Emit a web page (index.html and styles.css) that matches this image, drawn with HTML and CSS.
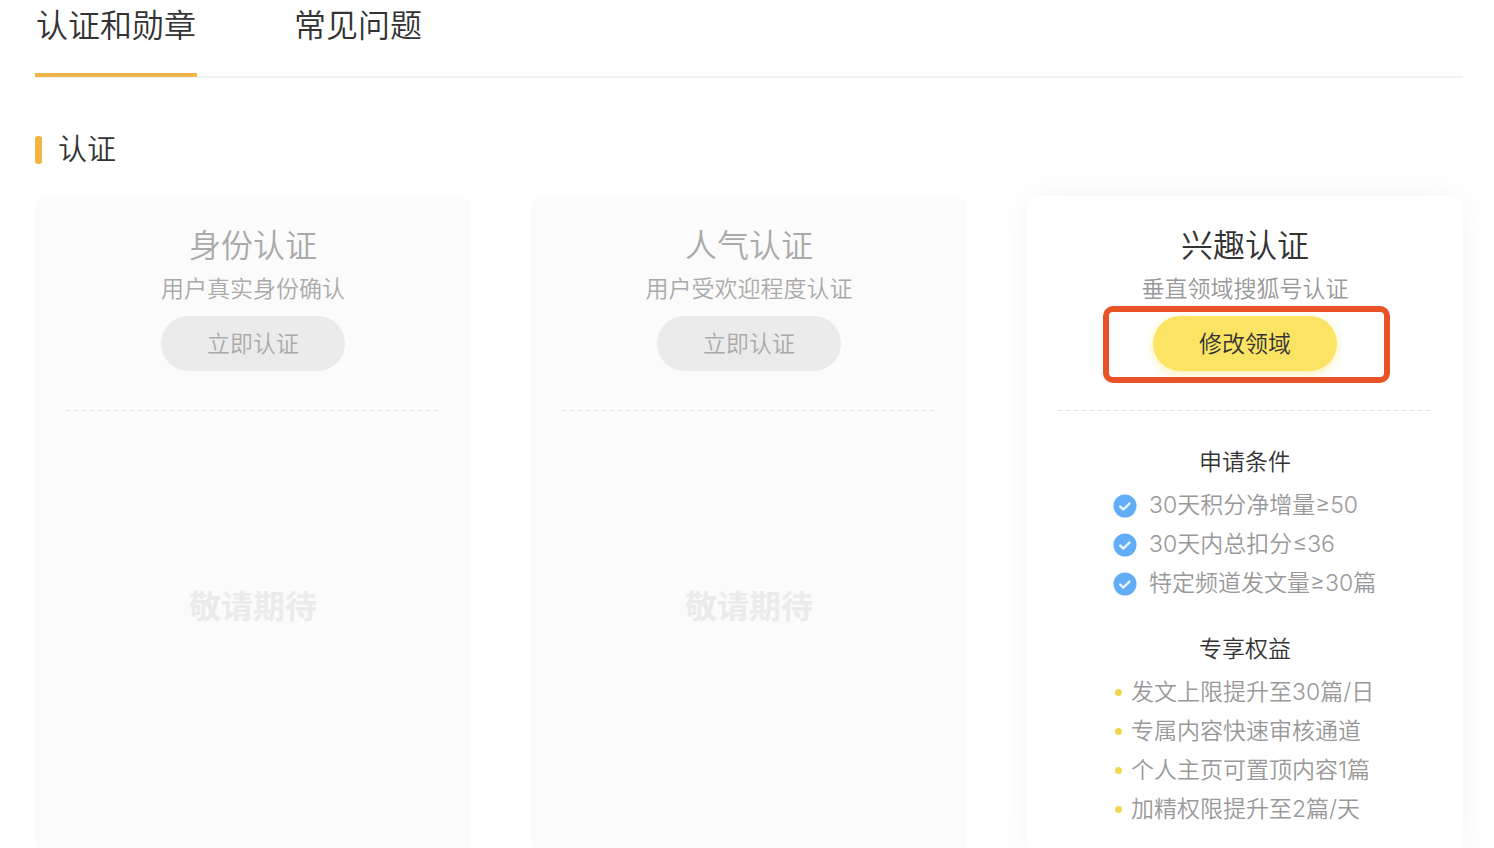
FILE: index.html
```html
<!DOCTYPE html>
<html lang="zh-CN">
<head>
<meta charset="utf-8">
<title>认证和勋章</title>
<link rel="stylesheet" href="styles.css">
</head>
<body>
<svg class="sprite" aria-hidden="true">
  <symbol id="check" viewBox="0 0 24 24">
    <circle cx="12" cy="12" r="11.5" fill="#63adf7"/>
    <path d="M7.2 12.6l3.2 2.9 6-5.9" fill="none" stroke="#e8f4ff" stroke-width="2.4" stroke-linecap="round" stroke-linejoin="round"/>
  </symbol>
</svg>
<main class="page">
  <nav class="tabs">
    <a class="tab tab-active" href="#badges">认证和勋章</a>
    <a class="tab" href="#faq">常见问题</a>
  </nav>
  <h1 class="section-title">认证</h1>
  <div class="cards">
    <section class="card card-disabled">
      <h2 class="card-title">身份认证</h2>
      <p class="card-sub">用户真实身份确认</p>
      <div class="action"><button class="btn" type="button" disabled>立即认证</button></div>
      <div class="divider"></div>
      <p class="soon">敬请期待</p>
    </section>
    <section class="card card-disabled">
      <h2 class="card-title">人气认证</h2>
      <p class="card-sub">用户受欢迎程度认证</p>
      <div class="action"><button class="btn" type="button" disabled>立即认证</button></div>
      <div class="divider"></div>
      <p class="soon">敬请期待</p>
    </section>
    <section class="card card-active">
      <h2 class="card-title">兴趣认证</h2>
      <p class="card-sub">垂直领域搜狐号认证</p>
      <div class="action highlighted"><button class="btn btn-primary" type="button">修改领域</button></div>
      <div class="divider"></div>
      <h3 class="group-title">申请条件</h3>
      <ul class="list conditions">
        <li><svg class="check"><use href="#check"/></svg>30天积分净增量≥50</li>
        <li><svg class="check"><use href="#check"/></svg>30天内总扣分≤36</li>
        <li><svg class="check"><use href="#check"/></svg>特定频道发文量≥30篇</li>
      </ul>
      <h3 class="group-title group-next">专享权益</h3>
      <ul class="list benefits">
        <li>发文上限提升至30篇/日</li>
        <li>专属内容快速审核通道</li>
        <li>个人主页可置顶内容1篇</li>
        <li>加精权限提升至2篇/天</li>
      </ul>
    </section>
  </div>
</main>
</body>
</html>
```
FILE: styles.css
```css
* { box-sizing: border-box; }

body {
  margin: 0;
  background: #fff;
  color: #333;
  font-family: Inter, "Noto Sans CJK SC", sans-serif;
  font-weight: 350;
}

h1, h2, h3, p, ul { margin: 0; padding: 0; font-weight: 350; }

.sprite { display: none; }

.page { padding: 0 31px 0 35px; }

.tabs {
  display: flex;
  gap: 96px;
  border-bottom: 2px solid #f2f2f2;
}

.tab {
  padding: 2px 1px 23px;
  margin-bottom: -1px;
  border-bottom: 4px solid transparent;
  color: #333;
  font-size: 32px;
  line-height: 48px;
  text-decoration: none;
}

.tab-active { border-bottom-color: #efb44a; }

.section-title {
  display: flex;
  align-items: center;
  gap: 16px;
  margin: 50px 0 24px;
  font-size: 29px;
  line-height: 44px;
}

.section-title::before {
  content: "";
  width: 7px;
  height: 28px;
  border-radius: 3px;
  background: #f2b540;
}

.cards {
  display: grid;
  grid-template-columns: repeat(3, 1fr);
  gap: 60px;
}

.card {
  padding: 26px 30px 24px;
  border-radius: 12px;
  font-size: 23px;
  text-align: center;
}

.card-disabled { background: #fbfbfb; color: #aaa; }

.card-active { box-shadow: 0 0 32px rgba(0, 0, 0, 0.05); }

.card-title { font-size: 32px; line-height: 48px; }

.card-sub { margin-top: 2px; line-height: 34px; }

.card-active .card-sub { color: #999; }

.action {
  position: relative;
  width: 184px;
  margin: 10px auto 39px;
}

.highlighted::after {
  content: "";
  position: absolute;
  inset: -10px -53px -12px -50px;
  border: 6px solid #ea5228;
  border-radius: 10px;
  pointer-events: none;
}

.btn {
  display: block;
  width: 100%;
  height: 55px;
  padding: 0 0 4px;
  border: 0;
  border-radius: 28px;
  background: #ebebeb;
  color: #aaa;
  font: inherit;
}

.btn-primary {
  background: #fbe463;
  color: #333;
  box-shadow: 0 3px 10px rgba(251, 228, 99, 0.5);
}

.divider {
  height: 1px;
  background: repeating-linear-gradient(90deg, #e6e6e6 0 5px, transparent 5px 8px);
}

.soon {
  margin-top: 172px;
  color: #ebebeb;
  font-size: 32px;
  font-weight: 700;
  line-height: 48px;
}

.group-title {
  margin: 34px 0 7px;
  font-size: 23px;
  line-height: 34px;
}

.group-next { margin-top: 29px; }

.list {
  list-style: none;
  color: #999;
  line-height: 39px;
  text-align: left;
  white-space: nowrap;
}

.list li { display: flex; align-items: center; }

.conditions { padding-left: 56px; }

.conditions li { gap: 12px; }

.check { width: 24px; height: 24px; }

.benefits { padding-left: 58px; }

.benefits li { gap: 9px; }

.benefits li::before {
  content: "";
  width: 7px;
  height: 7px;
  border-radius: 50%;
  background: #f0d84e;
}
```
